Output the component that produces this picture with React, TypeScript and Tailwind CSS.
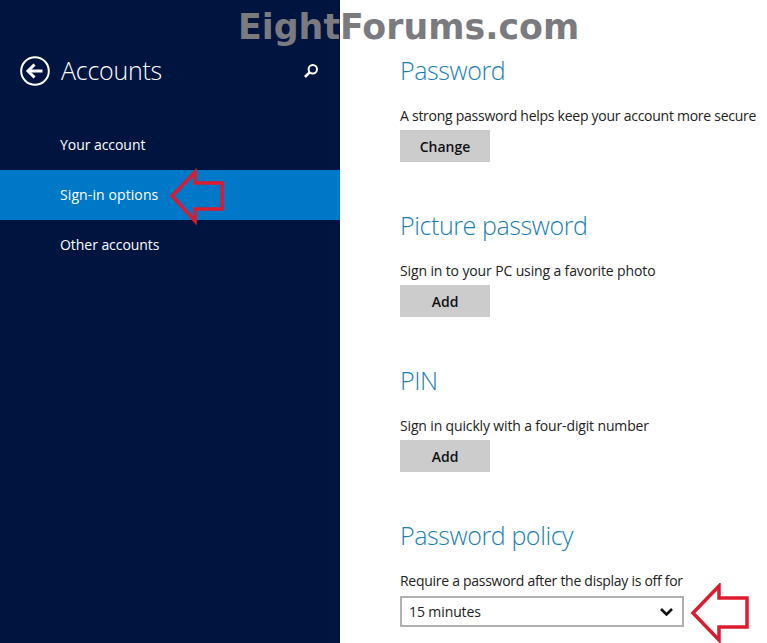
import React from 'react';

const sections = [
  { title: 'Password', copy: 'A strong password helps keep your account more secure', action: 'Change', tracking: 'tracking-[-0.26px]' },
  { title: 'Picture password', copy: 'Sign in to your PC using a favorite photo', action: 'Add', tracking: 'tracking-[-0.13px]' },
  { title: 'PIN', copy: 'Sign in quickly with a four-digit number', action: 'Add', tracking: 'tracking-[-0.15px]' },
];

const Heading = ({ children }: { children: React.ReactNode }) => (
  <h2 className="h-[40px] text-[25px] leading-[40px] tracking-[-0.4px] font-light text-[#1a7fb5]">{children}</h2>
);

const Copy = ({ children, tracking }: { children: React.ReactNode; tracking: string }) => (
  <p className={`mt-[16px] h-[20px] text-[14px] leading-[20px] text-[#222] whitespace-nowrap ${tracking}`}>{children}</p>
);

const RedArrow = ({ className, points }: { className: string; points: string }) => (
  <svg className={className} viewBox="0 0 60 60" fill="none">
    <polygon points={points} stroke="#dc1c2e" strokeWidth="3.5" strokeLinejoin="miter" />
  </svg>
);

export default function App() {
  return (
    <div className="relative flex h-[643px] w-[767px] overflow-hidden bg-white font-['Open_Sans',sans-serif]">
      <aside className="w-[340px] shrink-0 bg-[#001440] text-white">
        <div className="mt-[40px] flex h-[60px] items-center pl-[20px] pr-[20px]">
          <svg className="mt-[2px] h-[30px] w-[30px] shrink-0" viewBox="0 0 30 30" fill="none" stroke="white">
            <circle cx="15" cy="15" r="13.8" strokeWidth="2" />
            <path d="M8 15h14.5" strokeWidth="3" />
            <path d="M14.5 8.5L8 15l6.5 6.5" strokeWidth="3" />
          </svg>
          <h1 className="ml-[11px] text-[25px] font-light leading-[60px] tracking-[-0.25px]">Accounts</h1>
          <svg className="ml-auto mr-[1px] mt-[2px] h-[16px] w-[16px]" viewBox="0 0 16 16" fill="none" stroke="white">
            <circle cx="9.8" cy="6.2" r="4.2" strokeWidth="2" />
            <path d="M6.8 9.2L2 14" strokeWidth="2.6" />
          </svg>
        </div>
        <nav className="mt-[20px] text-[14px] tracking-[-0.05px]">
          <div className="flex h-[50px] items-center pb-[2px] pl-[60px]">Your account</div>
          <div className="flex h-[50px] items-center bg-[#0078c8] pb-[2px] pl-[60px] tracking-[0.1px]">Sign-in options</div>
          <div className="flex h-[50px] items-center pb-[2px] pl-[60px]">Other accounts</div>
        </nav>
      </aside>

      <main className="flex-1 pl-[60px] pt-[50px]">
        {sections.map(({ title, copy, action, tracking }) => (
          <section key={title} className="mb-[43px] h-[112px]">
            <Heading>{title}</Heading>
            <Copy tracking={tracking}>{copy}</Copy>
            <button className="mt-[4px] h-[32px] w-[90px] bg-[#cccccc] text-[14px] font-semibold text-[#111]">
              {action}
            </button>
          </section>
        ))}
        <section>
          <Heading>Password policy</Heading>
          <Copy tracking="tracking-[-0.28px]">Require a password after the display is off for</Copy>
          <div className="mt-[5px] flex h-[31px] w-[284px] items-center justify-between border-2 border-[#b0b0b0] pl-[7px] pr-[9px] text-[14px] tracking-[-0.1px] text-[#222]">
            15 minutes
            <svg className="h-[8px] w-[13px]" viewBox="0 0 13 8" fill="none" stroke="#111" strokeWidth="2.6">
              <path d="M1 1l5.5 5.5L12 1" />
            </svg>
          </div>
        </section>
      </main>

      <div className="absolute left-[238px] top-[6px] font-['DejaVu_Sans',sans-serif] text-[34.8px] leading-[42px] font-bold whitespace-nowrap text-[#7b7b7f]">
        EightForums.com
      </div>

      <RedArrow className="absolute left-[166px] top-[166px] h-[60px] w-[60px]" points="6,30 29,6 29,17 56,17 56,43 29,43 29,55" />
      <RedArrow className="absolute left-[690px] top-[583px] h-[60px] w-[60px]" points="3,30 29,3 29,15 57,15 57,44 29,44 29,57" />
    </div>
  );
}
